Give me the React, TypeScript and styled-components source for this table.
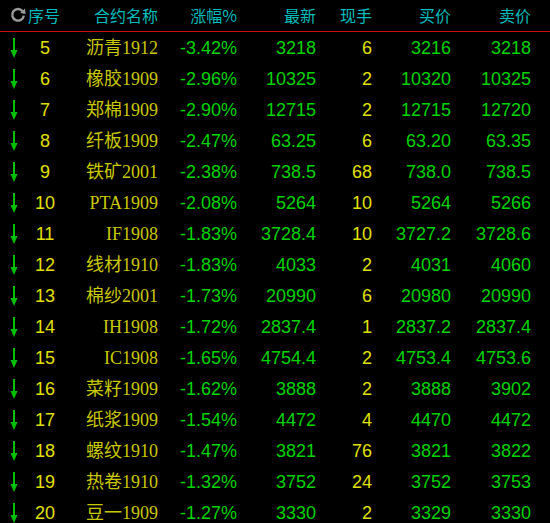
import React from "react";
import styled, { createGlobalStyle } from "styled-components";

const Global = createGlobalStyle`
  html, body { margin: 0; padding: 0; background: #000; }
  body { font-family: "Liberation Sans", Arial, sans-serif; }
`;

const COLS = "28px 34px 96px 79px 79px 56px 79px 80px 19px";

const Table = styled.div`
  width: 550px;
  height: 523px;
  background: #000;
  overflow: hidden;
`;

const HeaderRow = styled.div`
  display: grid;
  grid-template-columns: ${COLS};
  align-items: center;
  border-bottom: 1px solid #c81010;
  box-sizing: border-box;
  height: 32px;
  padding-bottom: 1px;
`;

const HeadCell = styled.div<{ $align?: string }>`
  color: #00bcbc;
  font-family: "Noto Sans CJK SC", "Liberation Sans", sans-serif;
  font-size: 16px;
  line-height: 20px;
  text-align: ${(p) => p.$align || "right"};
  white-space: nowrap;
`;

const IconCell = styled.div`
  display: flex;
  justify-content: flex-end;
  align-items: center;
  padding-right: 2px;
`;

const Row = styled.div`
  display: grid;
  grid-template-columns: ${COLS};
  height: 31px;
  align-items: center;
`;

const ArrowCell = styled.div`
  display: flex;
  justify-content: center;
  align-items: center;
  height: 31px;
`;

const Cell = styled.div<{ $color: string; $align?: string; $serif?: boolean }>`
  color: ${(p) => p.$color};
  font-family: ${(p) =>
    p.$serif
      ? `"Liberation Serif", "Noto Sans CJK SC", serif`
      : `"Liberation Sans", Arial, sans-serif`};
  font-size: 18px;
  line-height: 22px;
  text-align: ${(p) => p.$align || "right"};
  white-space: nowrap;
`;

const GREEN = "#00d200";
const YELLOW = "#e0e000";
const NAME = "#c8c800";

const rows: [string, string, string, string, string, string, string][] = [
  ["5", "沥青1912", "-3.42%", "3218", "6", "3216", "3218"],
  ["6", "橡胶1909", "-2.96%", "10325", "2", "10320", "10325"],
  ["7", "郑棉1909", "-2.90%", "12715", "2", "12715", "12720"],
  ["8", "纤板1909", "-2.47%", "63.25", "6", "63.20", "63.35"],
  ["9", "铁矿2001", "-2.38%", "738.5", "68", "738.0", "738.5"],
  ["10", "PTA1909", "-2.08%", "5264", "10", "5264", "5266"],
  ["11", "IF1908", "-1.83%", "3728.4", "10", "3727.2", "3728.6"],
  ["12", "线材1910", "-1.83%", "4033", "2", "4031", "4060"],
  ["13", "棉纱2001", "-1.73%", "20990", "6", "20980", "20990"],
  ["14", "IH1908", "-1.72%", "2837.4", "1", "2837.2", "2837.4"],
  ["15", "IC1908", "-1.65%", "4754.4", "2", "4753.4", "4753.6"],
  ["16", "菜籽1909", "-1.62%", "3888", "2", "3888", "3902"],
  ["17", "纸浆1909", "-1.54%", "4472", "4", "4470", "4472"],
  ["18", "螺纹1910", "-1.47%", "3821", "76", "3821", "3822"],
  ["19", "热卷1910", "-1.32%", "3752", "24", "3752", "3753"],
  ["20", "豆一1909", "-1.27%", "3330", "2", "3329", "3330"],
];

const RefreshIcon = () => (
  <svg width="16" height="16" viewBox="0 0 16 16">
    <path
      d="M12.6 4.2 A5.8 5.8 0 1 0 13.8 8.6"
      fill="none"
      stroke="#9a9a9a"
      strokeWidth="2.4"
    />
    <path d="M10.2 6 L15.6 7 L15 1.4 Z" fill="#9a9a9a" />
  </svg>
);

const DownArrow = () => (
  <svg width="10" height="20" viewBox="0 0 10 20">
    <line x1="5" y1="0" x2="5" y2="15" stroke="#00c000" strokeWidth="2" />
    <path d="M1.5 12 L8.5 12 L5 20 Z" fill="#00c000" />
  </svg>
);

export default function App() {
  return (
    <>
      <Global />
      <Table>
        <HeaderRow>
          <IconCell>
            <RefreshIcon />
          </IconCell>
          <HeadCell $align="left">序号</HeadCell>
          <HeadCell>合约名称</HeadCell>
          <HeadCell>涨幅%</HeadCell>
          <HeadCell>最新</HeadCell>
          <HeadCell>现手</HeadCell>
          <HeadCell>买价</HeadCell>
          <HeadCell>卖价</HeadCell>
          <div />
        </HeaderRow>
        {rows.map((r) => (
          <Row key={r[0]}>
            <ArrowCell>
              <DownArrow />
            </ArrowCell>
            <Cell $color={YELLOW} $align="center">
              {r[0]}
            </Cell>
            <Cell $color={NAME} $serif>
              {r[1]}
            </Cell>
            <Cell $color={GREEN}>{r[2]}</Cell>
            <Cell $color={GREEN}>{r[3]}</Cell>
            <Cell $color={YELLOW}>{r[4]}</Cell>
            <Cell $color={GREEN}>{r[5]}</Cell>
            <Cell $color={GREEN}>{r[6]}</Cell>
            <div />
          </Row>
        ))}
      </Table>
    </>
  );
}
